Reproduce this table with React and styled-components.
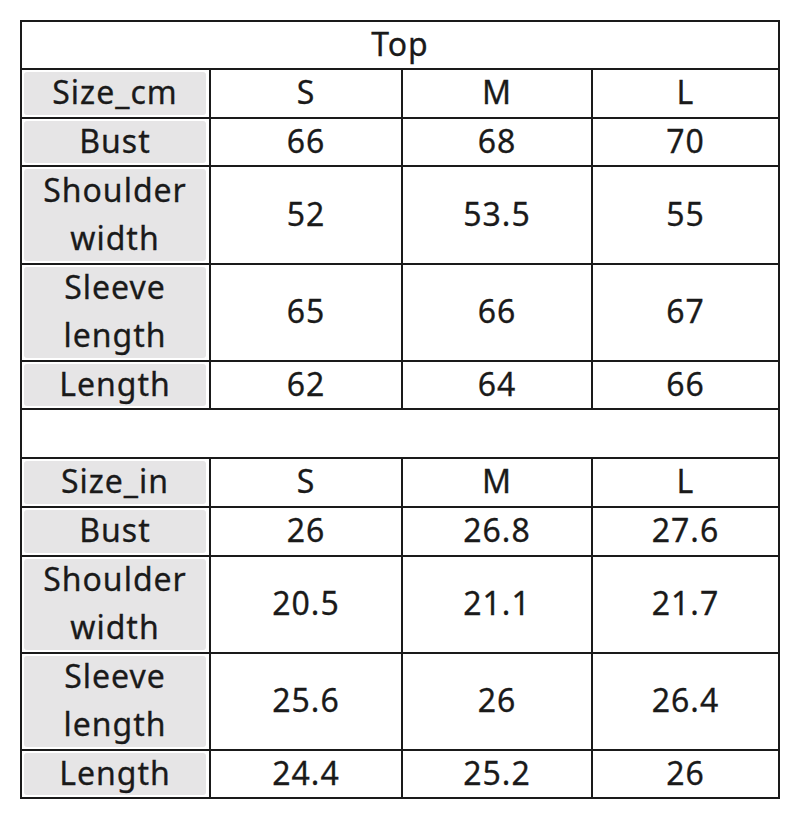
import styled, { createGlobalStyle } from 'styled-components'

const GlobalStyle = createGlobalStyle`
body {
  margin: 0;
  background: #fff;
  font-family: "Noto Sans", "Open Sans", sans-serif;
}
`

const Page = styled.div`
padding: 20px;
width: 760px;
`

const Grid = styled.div`
display: grid;
grid-template-columns: 187px 190px 188px 185px;
grid-template-rows: 46px 47px 46px 96px 95px 46px 47px 47px 47px 95px 95px 46px;
gap: 2px;
padding: 2px;
background: #1a1a1a;
width: 756px;
`

const Cell = styled.div`
background: #fff;
display: flex;
align-items: center;
justify-content: center;
text-align: center;
color: #1a1a1a;
font-size: 32px;
line-height: 48px;
letter-spacing: 1px;
padding-bottom: 3px;
-webkit-text-stroke: 0.3px #1a1a1a;
grid-column: ${p => (p.$wide ? '1 / -1' : 'auto')};
`

const LabelCell = styled.div`
background: #fff;
padding: 2px 3px 2px 2px;
display: flex;
`

const LabelFill = styled.div`
flex: 1;
background: #e6e5e6;
border-radius: 3px;
display: flex;
align-items: center;
justify-content: center;
text-align: center;
color: #1a1a1a;
font-size: 32px;
line-height: 48px;
letter-spacing: 1px;
padding-bottom: 3px;
-webkit-text-stroke: 0.3px #1a1a1a;
`

const cm = [
  ['Size_cm', 'S', 'M', 'L'],
  ['Bust', '66', '68', '70'],
  [['Shoulder', 'width'], '52', '53.5', '55'],
  [['Sleeve', 'length'], '65', '66', '67'],
  ['Length', '62', '64', '66'],
]

const inch = [
  ['Size_in', 'S', 'M', 'L'],
  ['Bust', '26', '26.8', '27.6'],
  [['Shoulder', 'width'], '20.5', '21.1', '21.7'],
  [['Sleeve', 'length'], '25.6', '26', '26.4'],
  ['Length', '24.4', '25.2', '26'],
]

const Label = ({ text }) => (
  <LabelCell>
    <LabelFill>
      {Array.isArray(text) ? <span>{text[0]}<br />{text[1]}</span> : text}
    </LabelFill>
  </LabelCell>
)

const Rows = ({ rows }) => rows.map((row, idx) => (
  <>
    <Label key={`l${idx}`} text={row[0]} />
    {row.slice(1).map((v, i) => <Cell key={`${idx}-${i}`}>{v}</Cell>)}
  </>
))

export default function App() {
  return (
    <>
      <GlobalStyle />
      <Page>
        <Grid>
          <Cell $wide>Top</Cell>
          <Rows rows={cm} />
          <Cell $wide />
          <Rows rows={inch} />
        </Grid>
      </Page>
    </>
  )
}
